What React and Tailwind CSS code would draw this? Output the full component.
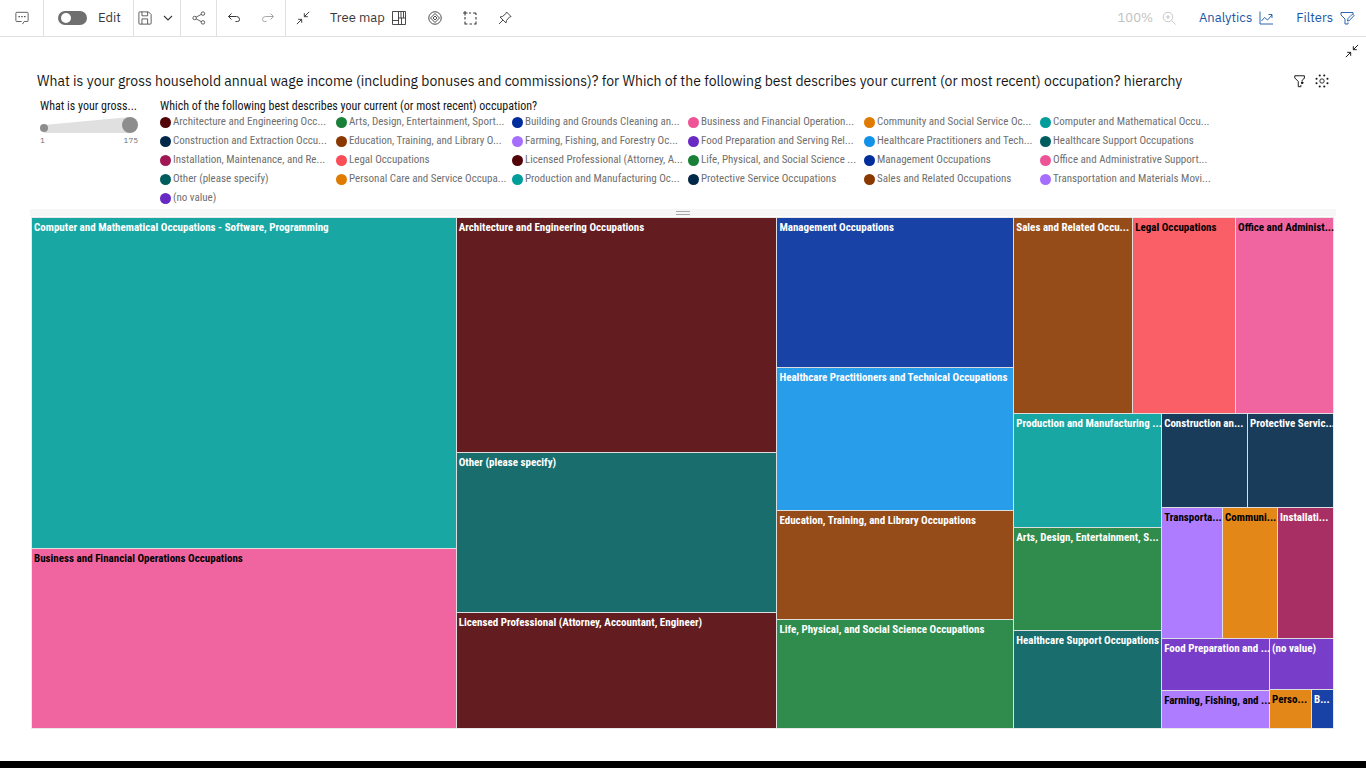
import React from "react";

const PLEX = "font-['IBM_Plex_Sans',Roboto,sans-serif]";
const COND = "font-['Roboto_Condensed','IBM_Plex_Sans_Condensed',Roboto,sans-serif]";

const C = {
  maroon: "#520408",
  navy: "#012749",
  magenta: "#9f1853",
  darkTeal: "#005d5d",
  purple: "#6929c4",
  green: "#198038",
  brown: "#8a3800",
  red: "#fa4d56",
  orange: "#e07a00",
  blue: "#002d9c",
  lilac: "#a56eff",
  teal: "#009d9a",
  pink: "#ee5396",
  cyan: "#1192e8",
};

const LEGEND = [
  [C.maroon, "Architecture and Engineering Occ..."],
  [C.green, "Arts, Design, Entertainment, Sport..."],
  [C.blue, "Building and Grounds Cleaning an..."],
  [C.pink, "Business and Financial Operation..."],
  [C.orange, "Community and Social Service Oc..."],
  [C.teal, "Computer and Mathematical Occu..."],
  [C.navy, "Construction and Extraction Occu..."],
  [C.brown, "Education, Training, and Library O..."],
  [C.lilac, "Farming, Fishing, and Forestry Oc..."],
  [C.purple, "Food Preparation and Serving Rel..."],
  [C.cyan, "Healthcare Practitioners and Tech..."],
  [C.darkTeal, "Healthcare Support Occupations"],
  [C.magenta, "Installation, Maintenance, and Re..."],
  [C.red, "Legal Occupations"],
  [C.maroon, "Licensed Professional (Attorney, A..."],
  [C.green, "Life, Physical, and Social Science ..."],
  [C.blue, "Management Occupations"],
  [C.pink, "Office and Administrative Support..."],
  [C.darkTeal, "Other (please specify)"],
  [C.orange, "Personal Care and Service Occupa..."],
  [C.teal, "Production and Manufacturing Oc..."],
  [C.navy, "Protective Service Occupations"],
  [C.brown, "Sales and Related Occupations"],
  [C.lilac, "Transportation and Materials Movi..."],
  [C.purple, "(no value)"],
];

const leaf = (size, color, label, dark) => ({ size, color, label, dark });
const row = (size, ...items) => ({ size, dir: "row", items });
const col = (size, ...items) => ({ size, dir: "col", items });

const TREE = row(
  1,
  col(
    424,
    leaf(330, C.teal, "Computer and Mathematical Occupations - Software, Programming"),
    leaf(179, C.pink, "Business and Financial Operations Occupations", true)
  ),
  col(
    320,
    leaf(234, C.maroon, "Architecture and Engineering Occupations"),
    leaf(159, C.darkTeal, "Other (please specify)"),
    leaf(115, C.maroon, "Licensed Professional (Attorney, Accountant, Engineer)")
  ),
  col(
    236,
    leaf(149, C.blue, "Management Occupations"),
    leaf(142, C.cyan, "Healthcare Practitioners and Technical Occupations"),
    leaf(108, C.brown, "Education, Training, and Library Occupations"),
    leaf(108, C.green, "Life, Physical, and Social Science Occupations")
  ),
  col(
    319,
    row(
      195,
      leaf(118, C.brown, "Sales and Related Occu..."),
      leaf(102, C.red, "Legal Occupations", true),
      leaf(97, C.pink, "Office and Administ...", true)
    ),
    row(
      314,
      col(
        147,
        leaf(113, C.teal, "Production and Manufacturing ..."),
        leaf(102, C.green, "Arts, Design, Entertainment, S..."),
        leaf(97, C.darkTeal, "Healthcare Support Occupations")
      ),
      col(
        171,
        row(93, leaf(85, C.navy, "Construction an..."), leaf(85, C.navy, "Protective Servic...")),
        row(
          130,
          leaf(60, C.lilac, "Transporta...", true),
          leaf(54, C.orange, "Communi...", true),
          leaf(55, C.magenta, "Installati...")
        ),
        row(
          89,
          col(
            107,
            leaf(51, C.purple, "Food Preparation and ..."),
            leaf(37, C.lilac, "Farming, Fishing, and ...", true)
          ),
          col(
            63,
            leaf(50, C.purple, "(no value)"),
            row(38, leaf(41, C.orange, "Perso...", true), leaf(21, C.blue, "B..."))
          )
        )
      )
    )
  )
);

function Node({ node }) {
  const grow = { flexGrow: node.size };
  if (node.items) {
    return (
      <div
        className={`flex min-h-0 min-w-0 basis-0 gap-px ${node.dir === "row" ? "flex-row" : "flex-col"}`}
        style={grow}
      >
        {node.items.map((n, i) => (
          <Node key={i} node={n} />
        ))}
      </div>
    );
  }
  return (
    <div className="grid min-h-0 min-w-0 basis-0 bg-white" style={grow}>
      <div className="min-w-0" style={{ backgroundColor: `${node.color}e6` }}>
        <p
          className={`pl-0.5 text-[11px] leading-5 font-bold whitespace-nowrap ${
            node.dark ? "text-black" : "text-white"
          }`}
        >
          {node.label}
        </p>
      </div>
    </div>
  );
}

function Icon({ children, size = "size-4", className = "", ...rest }) {
  return (
    <svg
      viewBox="0 0 32 32"
      fill="none"
      stroke="currentColor"
      strokeWidth="1.8"
      className={`${size} shrink-0 ${className}`}
      aria-hidden="true"
      {...rest}
    >
      {children}
    </svg>
  );
}

const CommentIcon = () => (
  <Icon size="size-3.5">
    <path d="M17 30l4-6h7a2 2 0 0 0 2-2V5a2 2 0 0 0-2-2H4a2 2 0 0 0-2 2v17a2 2 0 0 0 2 2h11" />
    <path d="M8 13h3M14.500 13h3M21 13h3" strokeWidth="3" />
  </Icon>
);
const SaveIcon = () => (
  <Icon size="size-3.5">
    <path d="M30 8l-6-6H4a2 2 0 0 0-2 2v24a2 2 0 0 0 2 2h24a2 2 0 0 0 2-2z" />
    <path d="M9 2v9h13V2M9 30V18h13v12" />
  </Icon>
);
const ChevronIcon = () => (
  <Icon>
    <path d="M8 12l8 8 8-8" strokeWidth="2.2" />
  </Icon>
);
const ShareIcon = () => (
  <Icon size="size-3.5">
    <circle cx="25" cy="6" r="4" />
    <circle cx="25" cy="26" r="4" />
    <circle cx="6" cy="16" r="4" />
    <path d="M9.500 14l12-6.500M9.500 18l12 6.500" />
  </Icon>
);
const UndoIcon = ({ className }) => (
  <Icon className={className}>
    <path d="M11 7l-6 6 6 6M5 13h16a6 6 0 0 1 6 6v0a4 4 0 0 1-4 4h-4" strokeWidth="2" />
  </Icon>
);
const CollapseIcon = ({ size }) => (
  <Icon size={size}>
    <path d="M30 2L19 13M19 5v8h8M2 30l11-11M5 19h8v8" strokeWidth="2.2" />
  </Icon>
);
const TreemapIcon = () => (
  <Icon>
    <path d="M3 3h26v26H3zM15 3v26M3 21h12M15 16h14M20 3v13M25 3v13M21 16v13" />
  </Icon>
);
const CompassIcon = () => (
  <Icon>
    <circle cx="16" cy="16" r="12.5" />
    <path d="M16 7l9 9-9 9-9-9z" />
    <path d="M16 12l4 4-4 4-4-4z" />
  </Icon>
);
const SelectIcon = () => (
  <Icon>
    <path
      d="M2 6h9M6 2v9M14 6h4M22 6h6M28 6v4M28 14v5M28 23v5h-4M20 28h-5M11 28H6v-5M6 19v-5"
      strokeWidth="2.2"
    />
  </Icon>
);
const PinIcon = () => (
  <Icon>
    <path d="M19 4l9 9-3 1-6 7-1 5L6 14l5-1 7-6zM12 20L4 28" />
  </Icon>
);
const ZoomInIcon = () => (
  <Icon>
    <circle cx="14" cy="14" r="9.5" />
    <path d="M21 21l8 8M14 9.500v9M9.500 14h9" />
  </Icon>
);
const ChartIcon = () => (
  <Icon>
    <path d="M4 3v25h26" />
    <path d="M7 22l6-7 6 5 9-10M21 9h7v7" />
  </Icon>
);
const FilterEditIcon = () => (
  <Icon>
    <path d="M28 9V5H4v5l8 8v10h6v-3" />
    <path d="M17 22l1-5 9-9 3 3-9 10z" />
  </Icon>
);
const FilterIcon = () => (
  <Icon size="size-3.5">
    <path d="M26 10V4H4v5l8 8v12h6v-4" strokeWidth="2.200" />
    <path d="M26 9l-6 7" strokeWidth="2.200" />
    <circle cx="21" cy="20" r="3" fill="currentColor" stroke="none" />
  </Icon>
);
const DOTS = [0, 1, 2, 3, 4, 5, 6, 7].map((i) => {
  const a = ((i + 0.5) * Math.PI) / 4;
  return [16 + 13.5 * Math.cos(a), 16 + 13.5 * Math.sin(a)];
});
const BurstIcon = () => (
  <Icon size="size-3.5">
    <circle cx="16" cy="16" r="5" strokeWidth="2" />
    {DOTS.map(([x, y], i) => (
      <circle key={i} cx={x} cy={y} r="2.4" fill="currentColor" stroke="none" />
    ))}
  </Icon>
);

function Tool({ label, children, className = "", ...rest }) {
  return (
    <button type="button" aria-label={label} className={`flex items-center justify-center ${className}`} {...rest}>
      {children}
    </button>
  );
}

export default function App() {
  return (
    <div className={`flex min-h-screen flex-col bg-white text-[#161616] ${PLEX}`}>
      <header className="flex h-[37px] items-stretch border-b border-[#e0e0e0] text-[13px] text-[#393939]">
        <div className="flex w-11 justify-center border-r border-[#e0e0e0]">
          <Tool label="Comments"><CommentIcon /></Tool>
        </div>
        <div className="flex w-[90px] items-center border-r border-[#e0e0e0] pl-3.5">
          <label className="flex cursor-pointer items-center gap-[11px]">
            <input
              type="checkbox"
              role="switch"
              className="h-3.5 w-[29px] appearance-none rounded-full bg-[#6f6f6f] before:ml-[3px] before:mt-[2px] before:block before:size-2.5 before:rounded-full before:bg-white checked:bg-[#198038] checked:before:ml-4"
            />
            Edit
          </label>
        </div>
        <div className="flex w-[47px] items-center justify-around border-r border-[#e0e0e0]">
          <Tool label="Save"><SaveIcon /></Tool>
          <Tool label="Save options"><ChevronIcon /></Tool>
        </div>
        <div className="flex w-9 justify-center border-r border-[#e0e0e0]">
          <Tool label="Share"><ShareIcon /></Tool>
        </div>
        <div className="flex w-[69px] items-center justify-around border-r border-[#e0e0e0]">
          <Tool label="Undo"><UndoIcon /></Tool>
          <Tool label="Redo" disabled className="text-[#a8a8a8]"><UndoIcon className="-scale-x-100" /></Tool>
        </div>
        <div className="flex items-center gap-5 pl-2.5">
          <Tool label="Collapse"><CollapseIcon size="size-3.5" /></Tool>
          <button type="button" className="flex items-center gap-1.5">
            Tree map <TreemapIcon />
          </button>
          <div className="flex gap-[19px]">
            <Tool label="Recommendations"><CompassIcon /></Tool>
            <Tool label="Select area"><SelectIcon /></Tool>
            <Tool label="Pin"><PinIcon /></Tool>
          </div>
        </div>
        <div className="ml-auto flex items-center gap-[22px] pr-[11px] text-[#1a56a8]">
          <button type="button" disabled className="flex items-center gap-2 text-[#c1c1c1]">
            100% <ZoomInIcon />
          </button>
          <button type="button" className="flex items-center gap-1.5">
            Analytics <ChartIcon />
          </button>
          <button type="button" className="flex items-center gap-1.5">
            Filters <FilterEditIcon />
          </button>
        </div>
      </header>

      <div className="flex h-7 items-center justify-end pr-[7px]">
        <Tool label="Collapse visualization"><CollapseIcon size="size-3.5" /></Tool>
      </div>

      <main className="flex flex-1 flex-col px-8 pb-[33px]">
        <div className="flex h-[31px] items-center justify-between gap-4 pr-[5px] pl-[5px]">
          <h1 className="text-[14px] leading-5 whitespace-nowrap">
            What is your gross household annual wage income (including bonuses and commissions)? for Which of the
            following best describes your current (or most recent) occupation? hierarchy
          </h1>
          <div className="flex gap-2">
            <Tool label="Filter"><FilterIcon /></Tool>
            <Tool label="Details"><BurstIcon /></Tool>
          </div>
        </div>

        <div className={`flex pl-2 ${COND}`}>
          <section className="w-[120px] shrink-0">
            <h2 className="pt-0.5 text-[12px] leading-4">What is your gross...</h2>
            <svg viewBox="0 0 98 20" className="mt-0.5 h-5 w-[98px]" aria-hidden="true">
              <path d="M4 9L90 1v16H4z" fill="#e0e0e0" />
              <circle cx="4" cy="12" r="4" fill="#8d8d8d" />
              <circle cx="90" cy="9" r="8" fill="#8d8d8d" />
            </svg>
            <div className={`flex w-[98px] justify-between text-[8px] leading-[9px] text-[#6f6f6f] ${PLEX}`}>
              <span>1</span>
              <span>175</span>
            </div>
          </section>
          <section>
            <h2 className="pt-0.5 text-[12px] leading-4">
              Which of the following best describes your current (or most recent) occupation?
            </h2>
            <ul className="-mt-px grid grid-cols-[repeat(6,176px)]">
              {LEGEND.map(([color, label], i) => (
                <li key={i} className="flex h-[19px] items-center gap-0.5 text-[11px] whitespace-nowrap text-[#6f6f6f]">
                  <span className="size-[11px] shrink-0 rounded-full" style={{ backgroundColor: color }} />
                  {label}
                </li>
              ))}
            </ul>
          </section>
        </div>

        <div className="-mx-0.5 mt-px mb-0.5 flex h-[7px] flex-col items-center justify-center gap-0.5 bg-[#f6f6f6]">
          <span className="h-px w-3.5 bg-[#a8a8a8]" />
          <span className="h-px w-3.5 bg-[#a8a8a8]" />
        </div>

        <div className={`mr-px flex flex-1 bg-[#dedede] ring-1 ring-[#e8e8e8] ${COND}`}>
          <Node node={TREE} />
        </div>
      </main>
      <footer className="h-[7px] bg-black" />
    </div>
  );
}
